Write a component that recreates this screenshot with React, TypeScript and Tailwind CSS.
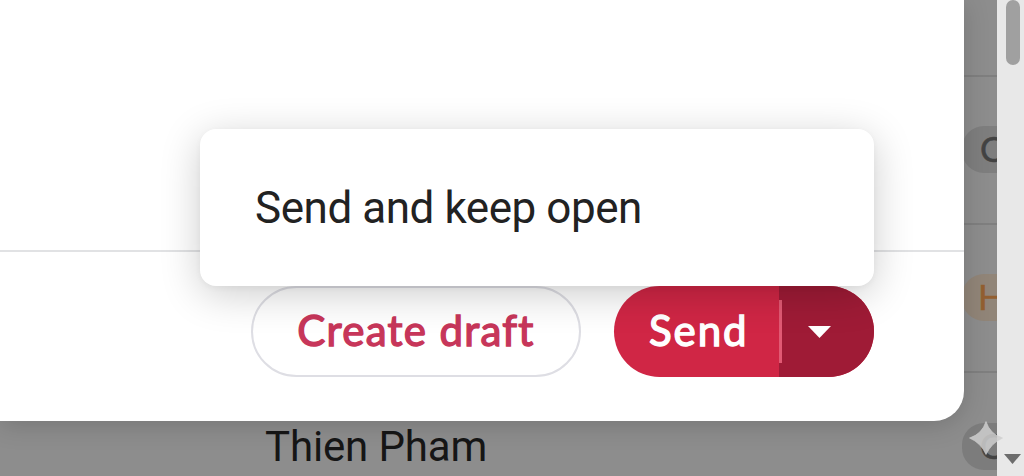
import { ReactNode } from "react";

type Row = {
    name?: string;
    initial?: string;
    chip?: string;
    height: string;
};

const rows: Row[] = [
    { height: "h-[77px]" },
    { initial: "C", chip: "mb-0.5 bg-[#7e7e7e] pl-[18px] text-[#434343]", height: "h-[148px]" },
    { initial: "H", chip: "mb-0.5 bg-[#918578] pl-[16px] text-[#935f31]", height: "h-[148px]" },
    { name: "Thien Pham", initial: "C", chip: "bg-[#7c7c7c] pl-[18px] text-[#434343]", height: "h-[149px]" },
];

function ListRow({ row }: { row: Row }) {
    return (
        <div className={`flex shrink-0 items-center border-b-2 border-[#7f7f7f] pl-[265px] ${row.height}`}>
            {row.name && (
                <p className="whitespace-nowrap text-[42px] leading-none tracking-[-0.15px] text-[#161616]">{row.name}</p>
            )}
            {row.initial && (
                <div className={`ml-auto flex h-[47px] w-[35px] shrink-0 items-center overflow-hidden rounded-l-[22px] pb-0.5 font-['Lato',sans-serif] text-[35px] leading-none [-webkit-text-stroke:0.5px_currentColor] ${row.chip}`}>
                    {row.initial}
                </div>
            )}
        </div>
    );
}

function Scrollbar() {
    return (
        <div className="flex w-[27px] shrink-0 flex-col items-center justify-between bg-[#e8e8e8] pb-3 pl-1">
            <div className="h-[65px] w-[14px] rounded-full bg-[#a0a0a0]" />
            <svg className="h-[10px] w-[17px]" viewBox="0 0 17 10">
                <path d="M0 0H17L8.5 10Z" fill="#6c6c6c" />
            </svg>
        </div>
    );
}

function Menu({ children }: { children: ReactNode }) {
    return (
        <div className="absolute left-[200px] top-[129px] flex h-[157px] w-[674px] items-center rounded-[16px] bg-white pl-[55px] shadow-[0_8px_40px_rgba(0,0,0,0.2),0_2px_6px_rgba(0,0,0,0.04)]">
            {children}
        </div>
    );
}

export default function App() {
    return (
        <div className="relative flex h-[476px] w-[1024px] overflow-hidden bg-[#8d8d8d] font-['Roboto',sans-serif]">
            <div className="flex min-w-0 flex-grow flex-col overflow-hidden">
                {rows.map((row, index) => <ListRow key={index} row={row} />)}
            </div>
            <Scrollbar />

            {/* Sparkle over the last chip */}
            <svg className="absolute left-[969px] top-[421px] h-[34px] w-[34px]" viewBox="0 0 34 34">
                <path d="M17 0.5Q21 13 33.5 17Q22.5 22 17 33.5Q12 22 0.5 17Q13 13 17 0.5Z" fill="#cfcfcf" fillOpacity="0.85" stroke="#cfcfcf" strokeOpacity="0.6" strokeLinejoin="round" />
            </svg>

            {/* Compose dialog */}
            <div className="absolute left-0 top-0 flex h-[421px] w-[964px] flex-col rounded-br-[30px] bg-white shadow-[0_4px_26px_rgba(0,0,0,0.17)]">
                <div className="h-[250px] shrink-0" />
                <div className="flex flex-grow items-start justify-end gap-[33px] border-t-2 border-[#e1e2e4] pr-[90px] pt-[34px] font-['Lato',sans-serif] text-[42px] leading-none tracking-[1.3px] [-webkit-text-stroke:1.4px_currentColor] [word-spacing:-1px]">
                    <button className="flex h-[91px] w-[330px] items-center justify-center rounded-full border-2 border-[#dedee4] pb-[3px] text-[#c7365a]">
                        Create draft
                    </button>
                    <div className="flex h-[91px] w-[260px] overflow-hidden rounded-full bg-[#d02645] text-white">
                        <button className="flex w-[165px] items-center pb-[3px] pl-[35px] tracking-[1.9px]">Send</button>
                        <button className="flex flex-grow items-center bg-[#9f1b36]">
                            <span className="h-[63px] w-[3px] bg-[#e15a74]" />
                            <svg className="ml-[26px] h-[12px] w-[23px]" viewBox="0 0 23 12">
                                <path d="M0 0H23L11.5 12Z" fill="#fff" />
                            </svg>
                        </button>
                    </div>
                </div>
            </div>

            <Menu>
                <p className="whitespace-nowrap text-[44px] leading-none tracking-[-0.45px] text-[#222]">Send and keep open</p>
            </Menu>
        </div>
    );
}
